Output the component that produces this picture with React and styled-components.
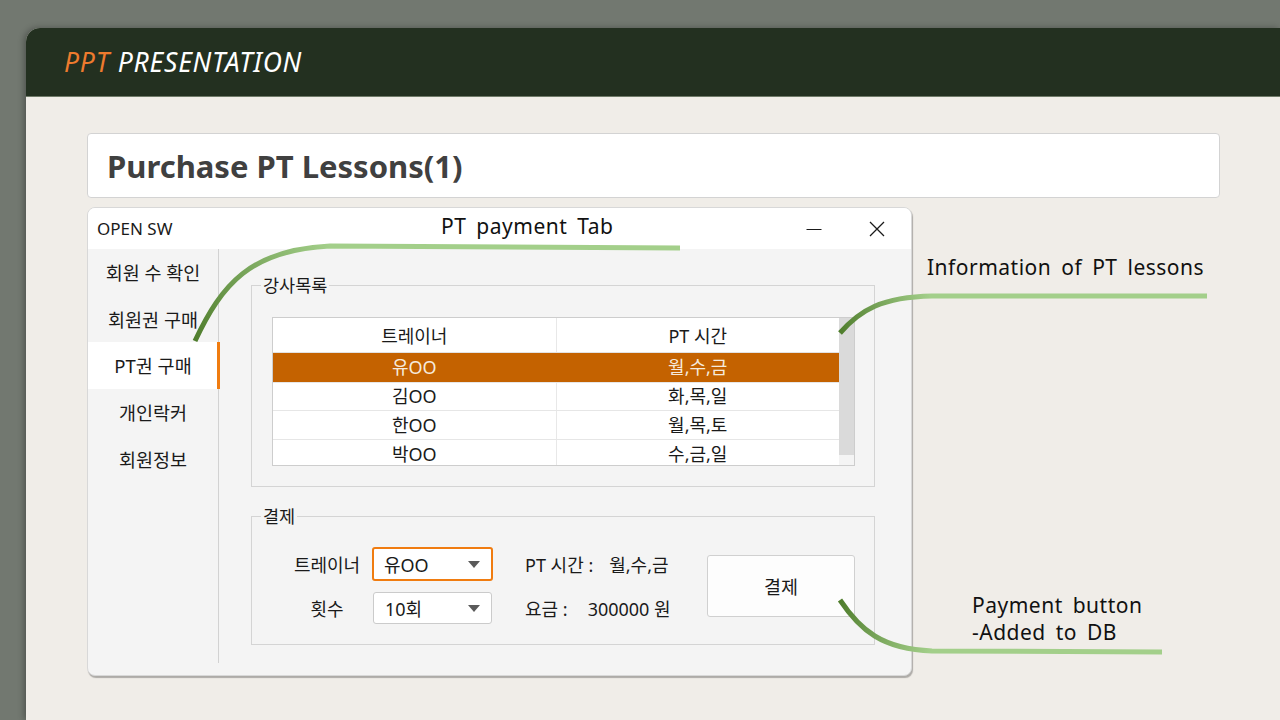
import React from 'react'
import styled, { createGlobalStyle } from 'styled-components'

const GlobalStyle = createGlobalStyle`
  html, body {
    margin: 0;
    padding: 0;
    background: #727870;
    font-family: "Noto Sans", "Noto Sans CJK KR", sans-serif;
  }
`

const Stage = styled.div`
  position: relative;
  width: 1280px;
  height: 720px;
  overflow: hidden;
`

const Slide = styled.div`
  margin: 28px 0 0 26px;
  height: 692px;
  background: #f0ede8;
  border-top-left-radius: 14px;
  overflow: hidden;
  box-shadow: -2px 0 6px rgba(0, 0, 0, 0.3);
`

const SlideHeader = styled.header`
  height: 68px;
  background: #233020;
  border-bottom: 1px solid #6f7a68;
  display: flex;
  align-items: center;
  padding-left: 38px;
  font-style: italic;
  font-weight: 400;
  font-size: 26.5px;
  color: #ffffff;
  letter-spacing: 0.8px;
`

const Accent = styled.span`
  color: #ee7b2e;
  margin-right: 8px;
`

const SlideBody = styled.div`
  padding: 36px 0 0 61px;
`

const TitleBox = styled.div`
  width: 1133px;
  height: 65px;
  box-sizing: border-box;
  background: #ffffff;
  border: 1px solid #d3d3d3;
  border-radius: 4px;
  display: flex;
  align-items: center;
  padding-left: 19px;
`

const Title = styled.h1`
  margin: 0;
  font-size: 31px;
  font-weight: 700;
  color: #404040;
`

const Window = styled.div`
  margin-top: 9px;
  width: 825px;
  height: 469px;
  box-sizing: border-box;
  background: #f4f4f4;
  border: 1px solid #d8d8d8;
  border-radius: 8px;
  box-shadow: 1px 2px 1px rgba(0, 0, 0, 0.28);
  display: flex;
  flex-direction: column;
  overflow: hidden;
`

const TitleBar = styled.div`
  height: 41px;
  flex: none;
  background: #ffffff;
  display: flex;
  align-items: center;
  padding: 0 3px 0 9px;
`

const AppName = styled.span`
  flex: 1;
  font-size: 17px;
  color: #1a1a1a;
`

const ControlButton = styled.div`
  width: 63px;
  height: 41px;
  display: flex;
  align-items: center;
  justify-content: center;
  color: #1a1a1a;
`

const WindowBody = styled.div`
  flex: 1;
  display: flex;
  align-items: stretch;
`

const Sidebar = styled.nav`
  width: 130px;
  flex: none;
  border-right: 1px solid #d2d2d2;
  margin-bottom: 12px;
`

const NavItem = styled.div`
  height: 46.6px;
  display: flex;
  align-items: center;
  justify-content: center;
  font-size: 18.5px;
  color: #1a1a1a;
  position: relative;
  background: ${p => (p.$active ? '#ffffff' : 'transparent')};
  &::after {
    content: '';
    display: ${p => (p.$active ? 'block' : 'none')};
    position: absolute;
    right: -2px;
    top: 0;
    bottom: 0;
    width: 3px;
    background: #f07c10;
  }
`

const Content = styled.div`
  flex: 1;
  padding: 25px 36px 0 32px;
  display: flex;
  flex-direction: column;
  gap: 18px;
`

const Group = styled.fieldset`
  margin: 0;
  width: 624px;
  box-sizing: border-box;
  border: 1px solid #d4d4d4;
  padding: ${p => p.$pad};
`

const Legend = styled.legend`
  margin-left: ${p => p.$shift}px;
  padding: 0 2px;
  font-size: 17.5px;
  line-height: 22px;
  color: #1a1a1a;
`

const TableFrame = styled.div`
  width: 583px;
  height: 149px;
  box-sizing: border-box;
  border: 1px solid #cdcdcd;
  background: #ffffff;
  display: flex;
  overflow: hidden;
`

const Grid = styled.table`
  width: 568px;
  border-collapse: collapse;
  table-layout: fixed;
  font-size: 18px;
  color: #1a1a1a;
`

const HeadCell = styled.th`
  height: 34px;
  padding: 0;
  font-weight: 400;
  text-align: center;
  border-bottom: 1px solid #e2e2e2;
  border-left: 1px solid #e8e8e8;
  &:first-child { border-left: none; }
`

const Row = styled.tr`
  background: ${p => (p.$selected ? '#c46200' : '#ffffff')};
  color: ${p => (p.$selected ? '#f6eadc' : '#1a1a1a')};
`

const Cell = styled.td`
  height: ${p => p.$h}px;
  padding: 0;
  line-height: ${p => p.$h}px;
  text-align: center;
  border-bottom: 1px solid #e6e6e6;
  border-left: 1px solid ${p => (p.$selected ? '#c46200' : '#e8e8e8')};
  &:first-child { border-left: none; }
`

const Scrollbar = styled.div`
  width: 15px;
  flex: none;
  background: #f4f4f4;
`

const ScrollThumb = styled.div`
  height: 137px;
  background: #dadada;
`

const PayRow = styled.div`
  display: flex;
  align-items: center;
  justify-content: space-between;
`

const PayForm = styled.div`
  display: grid;
  grid-template-columns: 74px 121px auto;
  grid-template-rows: 34px 34px;
  column-gap: 8px;
  row-gap: 10px;
  align-items: center;
  font-size: 18px;
  color: #1a1a1a;
`

const FieldLabel = styled.div`
  text-align: center;
`

const Select = styled.div`
  box-sizing: border-box;
  width: ${p => (p.$focused ? 121 : 119)}px;
  height: ${p => (p.$focused ? 34 : 32)}px;
  margin-left: ${p => (p.$focused ? 0 : 1)}px;
  background: #ffffff;
  border: ${p => (p.$focused ? '2px solid #f07c10' : '1px solid #cbcbcb')};
  border-radius: 3px;
  display: flex;
  align-items: center;
  justify-content: space-between;
  padding: 0 11px 0 ${p => (p.$focused ? 10 : 11)}px;
`

const Caret = styled.span`
  width: 0;
  height: 0;
  border-left: 6px solid transparent;
  border-right: 6px solid transparent;
  border-top: 7px solid #5a5a5a;
`

const Info = styled.div`
  margin-left: 24px;
  white-space: nowrap;
`

const InfoValue = styled.span`
  margin-left: ${p => p.$gap}px;
`

const PayButton = styled.button`
  width: 148px;
  height: 62px;
  background: #fdfdfd;
  border: 1px solid #d0d0d0;
  border-radius: 3px;
  font-family: inherit;
  font-size: 18.5px;
  color: #1a1a1a;
`

const Callout = styled.div`
  position: absolute;
  left: ${p => p.$x}px;
  top: ${p => p.$y}px;
  font-size: 21px;
  line-height: 27px;
  letter-spacing: 0.5px;
  word-spacing: 4px;
  color: #111111;
  white-space: nowrap;
`

const Overlay = styled.svg`
  position: absolute;
  inset: 0;
  pointer-events: none;
`

const trainers = [
  { name: '유OO', time: '월,수,금', h: 29, selected: true },
  { name: '김OO', time: '화,목,일', h: 27 },
  { name: '한OO', time: '월,목,토', h: 28 },
  { name: '박OO', time: '수,금,일', h: 28 },
]

const navItems = ['회원 수 확인', '회원권 구매', 'PT권 구매', '개인락커', '회원정보']

const Leader = ({ id, d, x1, y1, x2, y2 }) => (
  <>
    <defs>
      <linearGradient id={id} gradientUnits="userSpaceOnUse" x1={x1} y1={y1} x2={x2} y2={y2}>
        <stop offset="0" stopColor="#4f7d2c" />
        <stop offset="1" stopColor="#a3cf8a" />
      </linearGradient>
    </defs>
    <path d={d} fill="none" stroke={`url(#${id})`} strokeWidth="5" />
  </>
)

export default function App() {
  return (
    <Stage>
      <GlobalStyle />
      <Slide>
        <SlideHeader>
          <Accent>PPT</Accent>PRESENTATION
        </SlideHeader>
        <SlideBody>
          <TitleBox>
            <Title>Purchase PT Lessons(1)</Title>
          </TitleBox>
          <Window>
            <TitleBar>
              <AppName>OPEN SW</AppName>
              <ControlButton>
                <svg width="16" height="16" viewBox="0 0 16 16">
                  <path d="M0.5 8.5h15" stroke="#1a1a1a" strokeWidth="1.2" />
                </svg>
              </ControlButton>
              <ControlButton>
                <svg width="16" height="16" viewBox="0 0 16 16">
                  <path d="M1 1l14 14M15 1L1 15" stroke="#1a1a1a" strokeWidth="1.3" />
                </svg>
              </ControlButton>
            </TitleBar>
            <WindowBody>
              <Sidebar>
                {navItems.map(item => (
                  <NavItem key={item} $active={item === 'PT권 구매'}>{item}</NavItem>
                ))}
              </Sidebar>
              <Content>
                <Group $pad="21px 19px 20px 20px">
                  <Legend $shift={-11}>강사목록</Legend>
                  <TableFrame>
                    <Grid>
                      <thead>
                        <tr>
                          <HeadCell>트레이너</HeadCell>
                          <HeadCell>PT 시간</HeadCell>
                        </tr>
                      </thead>
                      <tbody>
                        {trainers.map(t => (
                          <Row key={t.name} $selected={t.selected}>
                            <Cell $h={t.h} $selected={t.selected}>{t.name}</Cell>
                            <Cell $h={t.h} $selected={t.selected}>{t.time}</Cell>
                          </Row>
                        ))}
                      </tbody>
                    </Grid>
                    <Scrollbar>
                      <ScrollThumb />
                    </Scrollbar>
                  </TableFrame>
                </Group>
                <Group $pad="20px 19px 19px 38px">
                  <Legend $shift={-29}>결제</Legend>
                  <PayRow>
                    <PayForm>
                      <FieldLabel>트레이너</FieldLabel>
                      <Select $focused>
                        유OO<Caret />
                      </Select>
                      <Info>
                        PT 시간 :<InfoValue $gap={16}>월,수,금</InfoValue>
                      </Info>
                      <FieldLabel>횟수</FieldLabel>
                      <Select>
                        10회<Caret />
                      </Select>
                      <Info>
                        요금 :<InfoValue $gap={20}>300000 원</InfoValue>
                      </Info>
                    </PayForm>
                    <PayButton>결제</PayButton>
                  </PayRow>
                </Group>
              </Content>
            </WindowBody>
          </Window>
        </SlideBody>
      </Slide>

      <Overlay width="1280" height="720" viewBox="0 0 1280 720">
        <Leader id="g1" d="M195 341 C 222 284, 250 250, 330 246 L 680 248" x1="195" y1="341" x2="330" y2="246" />
        <Leader id="g2" d="M840 333 C 860 310, 882 297, 932 296 L 1207 296" x1="840" y1="333" x2="930" y2="296" />
        <Leader id="g3" d="M840 600 C 860 630, 882 649, 932 651 L 1162 652" x1="840" y1="600" x2="930" y2="652" />
      </Overlay>

      <Callout $x={441} $y={213}>PT payment Tab</Callout>
      <Callout $x={927} $y={254}>Information of PT lessons</Callout>
      <Callout $x={972} $y={592}>
        Payment button
        <br />
        -Added to DB
      </Callout>
    </Stage>
  )
}
